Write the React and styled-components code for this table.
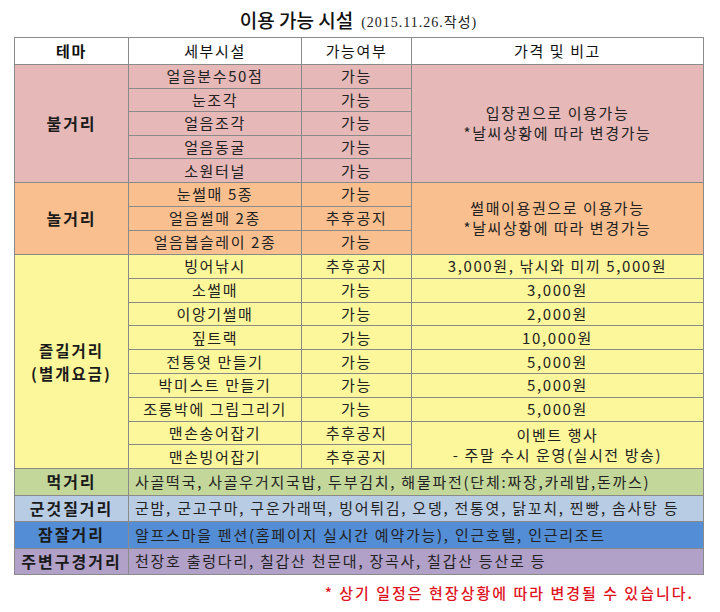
import styled, { createGlobalStyle } from "styled-components";

const KR = `"Noto Sans CJK KR", "Noto Sans", sans-serif`;

const tones = {
  white: "#ffffff",
  pink: "#e6b8b7",
  orange: "#fabf8f",
  yellow: "#fdf79b",
  green: "#c4d79b",
  sky: "#b8cce4",
  blue: "#538dd5",
  purple: "#b1a0c7",
};

const GlobalStyle = createGlobalStyle`
  body {
    margin: 0;
    background: #ffffff;
    font-family: ${KR};
    color: #1e1e1e;
  }
`;

const sections = [
  {
    theme: "불거리",
    tone: "pink",
    h: 23.6,
    rows: [
      ["얼음분수50점", "가능"],
      ["눈조각", "가능"],
      ["얼음조각", "가능"],
      ["얼음동굴", "가능"],
      ["소원터널", "가능"],
    ],
    note: ["입장권으로 이용가능", "*날씨상황에 따라 변경가능"],
  },
  {
    theme: "놀거리",
    tone: "orange",
    h: 24,
    rows: [
      ["눈썰매 5종", "가능"],
      ["얼음썰매 2종", "추후공지"],
      ["얼음봅슬레이 2종", "가능"],
    ],
    note: ["썰매이용권으로 이용가능", "*날씨상황에 따라 변경가능"],
  },
];

const fun = [
  ["빙어낚시", "추후공지", "3,000원, 낚시와 미끼 5,000원"],
  ["소썰매", "가능", "3,000원"],
  ["이앙기썰매", "가능", "2,000원"],
  ["짚트랙", "가능", "10,000원"],
  ["전통엿 만들기", "가능", "5,000원"],
  ["박미스트 만들기", "가능", "5,000원"],
  ["조롱박에 그림그리기", "가능", "5,000원"],
  ["맨손송어잡기", "추후공지"],
  ["맨손빙어잡기", "추후공지"],
];

const extras = [
  ["먹거리", "green", "사골떡국, 사골우거지국밥, 두부김치, 해물파전(단체:짜장,카레밥,돈까스)"],
  ["군것질거리", "sky", "군밤, 군고구마, 구운가래떡, 빙어튀김, 오뎅, 전통엿, 닭꼬치, 찐빵, 솜사탕 등"],
  ["잠잘거리", "blue", "알프스마을 펜션(홈페이지 실시간 예약가능), 인근호텔, 인근리조트"],
  ["주변구경거리", "purple", "천장호 출렁다리, 칠갑산 천문대, 장곡사, 칠갑산 등산로 등"],
];

export default function App() {
  return (
    <Page>
      <GlobalStyle />
      <TitleBar>
        <Title>이용 가능 시설</Title>
        <Dated>(2015.11.26.작성)</Dated>
      </TitleBar>
      <Table>
        <colgroup>
          <col style={{ width: 114 }} />
          <col style={{ width: 173 }} />
          <col style={{ width: 110 }} />
          <col style={{ width: 292 }} />
        </colgroup>
        <tbody>
          <Row $h={27}>
            <Head $bold>테마</Head>
            <Head>세부시설</Head>
            <Head>가능여부</Head>
            <Head>가격 및 비고</Head>
          </Row>

          {sections.map((s) =>
            s.rows.map(([name, status], i) => (
              <Row key={s.theme + i} $h={s.h}>
                {i === 0 && (
                  <ThemeCell $tone={s.tone} rowSpan={s.rows.length}>
                    {s.theme}
                  </ThemeCell>
                )}
                <Cell $tone={s.tone}>{name}</Cell>
                <Cell $tone={s.tone}>{status}</Cell>
                {i === 0 && (
                  <Cell $tone={s.tone} rowSpan={s.rows.length}>
                    {s.note[0]}
                    <br />
                    {s.note[1]}
                  </Cell>
                )}
              </Row>
            ))
          )}

          {fun.map(([name, status, price], i) => (
            <Row key={name} $h={23.8}>
              {i === 0 && (
                <ThemeCell $tone="yellow" $tall rowSpan={fun.length}>
                  즐길거리
                  <br />
                  (별개요금)
                </ThemeCell>
              )}
              <Cell $tone="yellow">{name}</Cell>
              <Cell $tone="yellow">{status}</Cell>
              {price && <Cell $tone="yellow">{price}</Cell>}
              {i === 7 && (
                <Cell $tone="yellow" rowSpan={2}>
                  이벤트 행사
                  <br />- 주말 수시 운영(실시전 방송)
                </Cell>
              )}
            </Row>
          ))}

          {extras.map(([theme, tone, text]) => (
            <Row key={theme} $h={26.5}>
              <ThemeCell $tone={tone}>{theme}</ThemeCell>
              <WideCell $tone={tone} colSpan={3}>
                {text}
              </WideCell>
            </Row>
          ))}
        </tbody>
      </Table>
      <Footnote>* 상기 일정은 현장상황에 따라 변경될 수 있습니다.</Footnote>
    </Page>
  );
}

const Page = styled.div`
  width: 720px;
  height: 612px;
  padding: 0 0 0 14px;
  box-sizing: border-box;
  overflow: hidden;
`;

const TitleBar = styled.div`
  height: 37px;
  width: 689px;
  display: flex;
  justify-content: center;
  align-items: center;
  gap: 8px;
  padding-top: 1px;
  box-sizing: border-box;
`;

const Title = styled.span`
  font-size: 19px;
  font-weight: 500;
  color: #111;
`;

const Dated = styled.span`
  font-family: "Liberation Serif", ${KR};
  font-size: 14px;
  color: #222;
  padding-top: 3px;
  letter-spacing: 1px;
`;

const Table = styled.table`
  border-collapse: collapse;
  table-layout: fixed;
  width: 689px;
  border: 1px solid #7a7a7a;
`;

const Row = styled.tr`
  height: ${({ $h }) => $h}px;
`;

const Cell = styled.td`
  background: ${({ $tone }) => tones[$tone]};
  border: 1px solid #8a8a8a;
  padding: 0;
  text-align: center;
  vertical-align: middle;
  font-size: 15px;
  line-height: 20px;
  letter-spacing: 1.6px;
  color: #222;
  white-space: nowrap;
`;

const Head = styled(Cell)`
  background: #ffffff;
  font-weight: ${({ $bold }) => ($bold ? 700 : 400)};
  color: #111;
`;

const ThemeCell = styled(Cell)`
  font-size: ${({ $tall }) => ($tall ? 15.5 : 16)}px;
  font-weight: 700;
  letter-spacing: 2px;
  line-height: ${({ $tall }) => ($tall ? 23 : 21)}px;
  color: #1a1a1a;
`;

const WideCell = styled(Cell)`
  text-align: left;
  padding-left: 6px;
  letter-spacing: 1.75px;
`;

const Footnote = styled.div`
  width: 680px;
  margin-top: 7px;
  text-align: right;
  font-size: 15px;
  font-weight: 500;
  letter-spacing: 2px;
  color: #e0141e;
`;
